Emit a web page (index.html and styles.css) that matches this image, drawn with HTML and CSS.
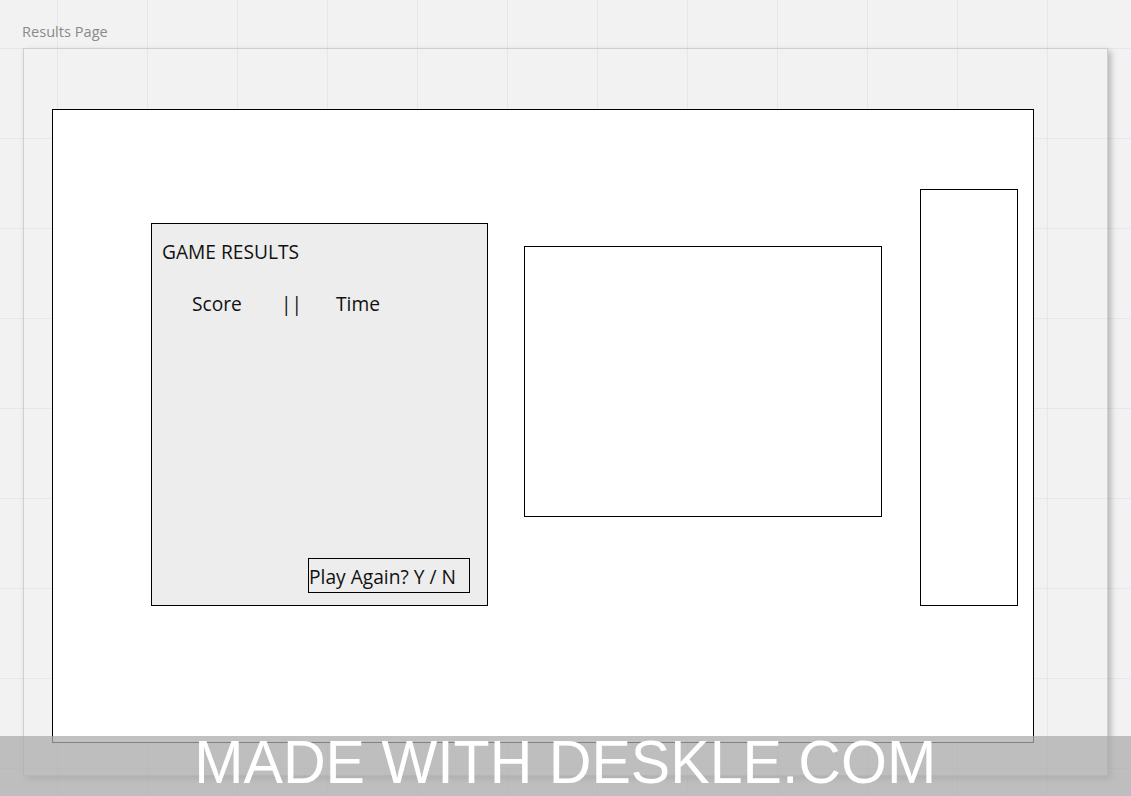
FILE: index.html
```html
<!DOCTYPE html>
<html>
<head>
<meta charset="utf-8">
<link rel="stylesheet" href="styles.css">
</head>
<body>
<div class="board">
  <div class="page-label">Results Page</div>
  <div class="page-frame">
    <div class="canvas">
      <div class="results">
        <div class="results-title">GAME RESULTS</div>
        <div class="results-cols"><span class="c-score">Score</span><span class="c-sep">||</span><span class="c-time">Time</span></div>
        <div class="play-again">Play Again? Y / N</div>
      </div>
      <div class="panel-mid"></div>
      <div class="panel-right"></div>
    </div>
  </div>
  <div class="watermark"><span class="wm-text">MADE WITH DESKLE.COM</span></div>
</div>
</body>
</html>
```
FILE: styles.css
```css
html, body {
  margin: 0;
  padding: 0;
}
body {
  width: 1131px;
  height: 796px;
  overflow: hidden;
  font-family: "Open Sans", "Liberation Sans", sans-serif;
}
.board {
  position: relative;
  width: 1131px;
  height: 796px;
  background-color: #f2f2f2;
  background-image:
    linear-gradient(to right, #e6e6ec 1px, transparent 1px),
    linear-gradient(to bottom, #e6e6ec 1px, transparent 1px);
  background-size: 90px 90px;
  background-position: 57px 48px;
  padding: 21px 0 0 22px;
  box-sizing: border-box;
}
.page-label {
  font-size: 14.6px;
  line-height: 20px;
  color: #8a8a8a;
  height: 27px;
}
.page-frame {
  width: 1085px;
  height: 728px;
  margin-left: 1px;
  box-sizing: border-box;
  border: 1px solid #cfcfcf;
  box-shadow: 3px 3px 6px rgba(0,0,0,0.25);
  padding: 60px 0 0 28px;
}
.canvas {
  position: relative;
  width: 982px;
  height: 634px;
  box-sizing: border-box;
  background: #fff;
  border: 1px solid #000;
}
.results {
  position: absolute;
  left: 98px;
  top: 113px;
  width: 337px;
  height: 383px;
  box-sizing: border-box;
  background: #ededed;
  border: 1px solid #000;
  color: #111;
  font-size: 19.2px;
}
.results-title {
  margin: 14px 0 0 10px;
  line-height: 28px;
}
.results-cols {
  display: flex;
  margin: 24px 0 0 40px;
  line-height: 28px;
}
.c-score { width: 89px; }
.c-sep { width: 55px; }
.play-again {
  position: absolute;
  left: 156px;
  top: 334px;
  width: 162px;
  height: 35px;
  box-sizing: border-box;
  border: 1px solid #000;
  line-height: 35px;
  padding-left: 0;
  white-space: nowrap;
}
.panel-mid {
  position: absolute;
  left: 471px;
  top: 136px;
  width: 358px;
  height: 271px;
  box-sizing: border-box;
  border: 1px solid #000;
  background: #fff;
}
.panel-right {
  position: absolute;
  left: 867px;
  top: 79px;
  width: 98px;
  height: 417px;
  box-sizing: border-box;
  border: 1px solid #000;
  background: #fff;
}
.watermark {
  position: absolute;
  left: 0;
  top: 736px;
  width: 1131px;
  height: 60px;
  background: rgba(172,172,172,0.75);
  overflow: hidden;
  display: flex;
  justify-content: center;
}
.wm-text {
  display: block;
  font-family: "Liberation Sans", Arial, sans-serif;
  font-size: 62px;
  line-height: 50px;
  height: 50px;
  color: #fff;
  white-space: nowrap;
  transform: scaleX(0.953);
  margin-top: 1px;
}
```
